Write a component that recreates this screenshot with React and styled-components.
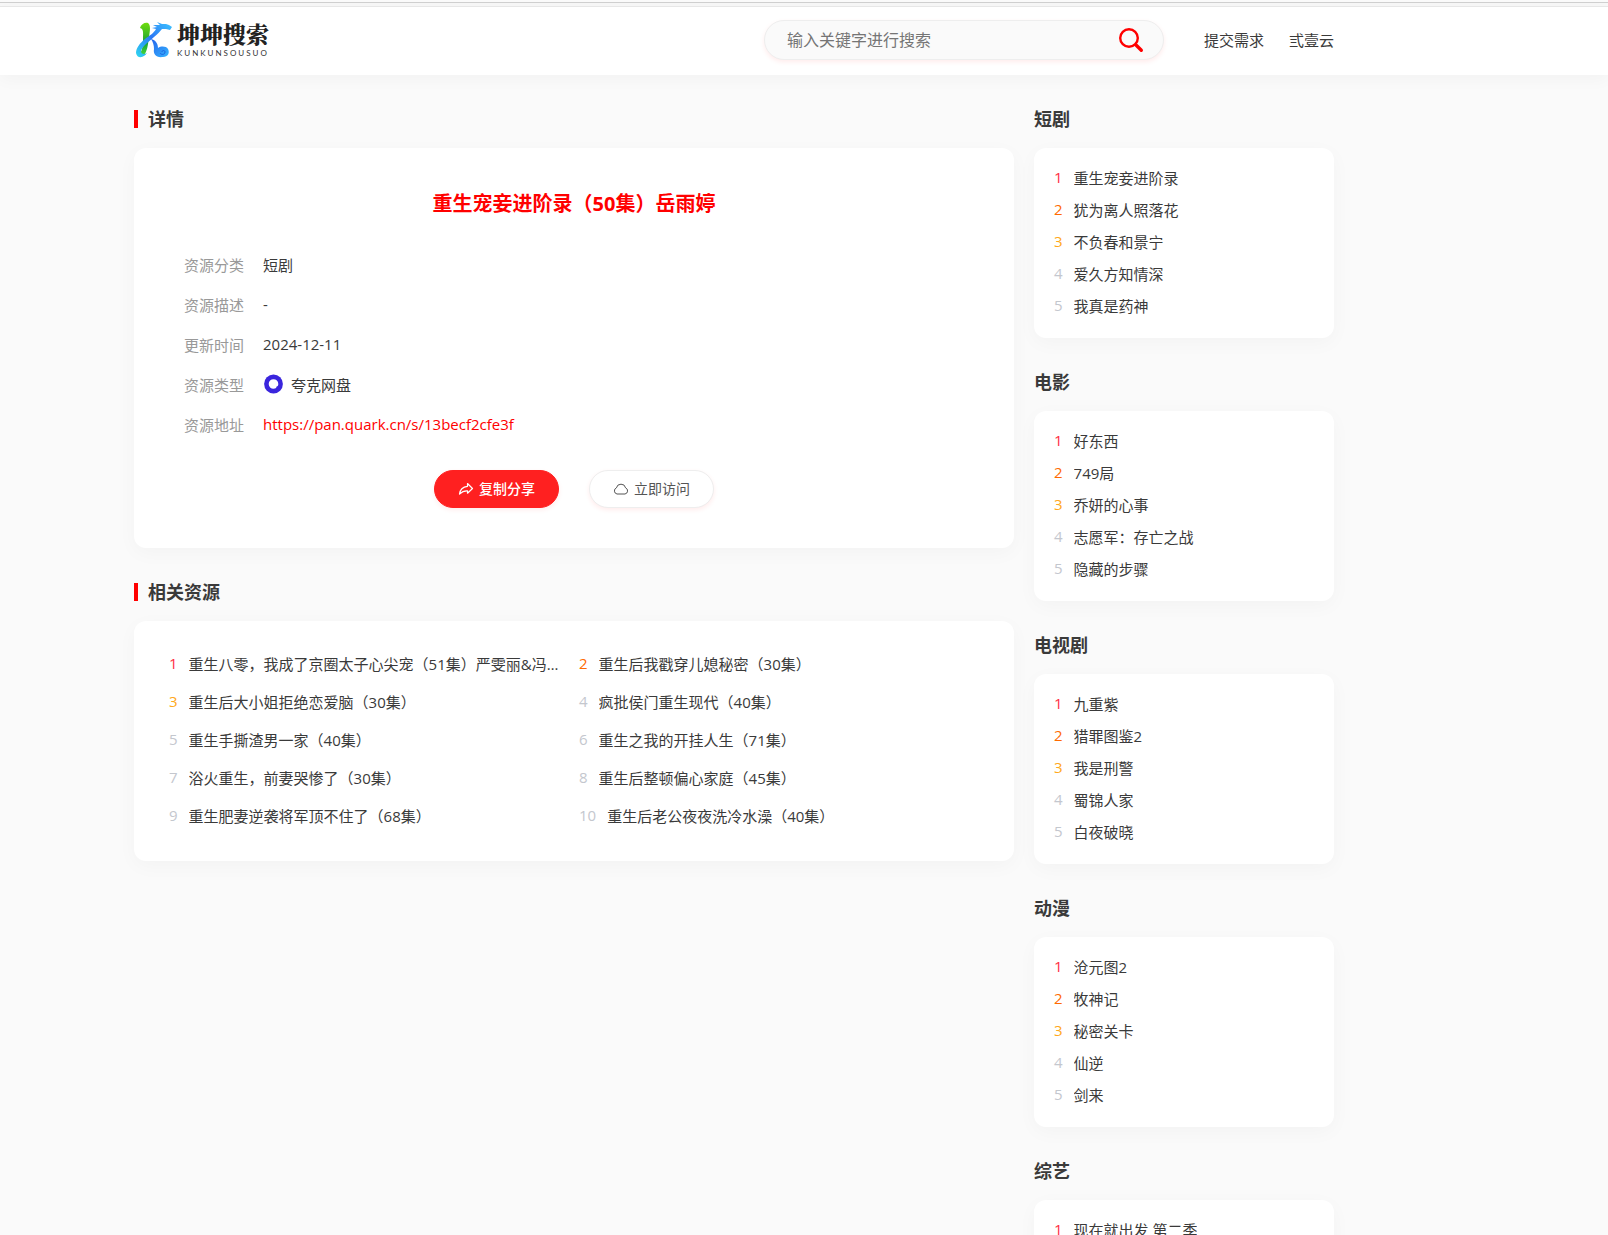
import styled, { createGlobalStyle } from "styled-components";

const menu = ["提交需求", "弎壹云"];

const details = [
    { label: "资源分类", value: "短剧" },
    { label: "资源描述", value: "-" },
    { label: "更新时间", value: "2024-12-11" },
    { label: "资源类型", value: "夸克网盘", quark: true },
    { label: "资源地址", value: "https://pan.quark.cn/s/13becf2cfe3f", link: true },
];

const related = [
    "重生八零，我成了京圈太子心尖宠（51集）严雯丽&冯子航",
    "重生后我戳穿儿媳秘密（30集）",
    "重生后大小姐拒绝恋爱脑（30集）",
    "疯批侯门重生现代（40集）",
    "重生手撕渣男一家（40集）",
    "重生之我的开挂人生（71集）",
    "浴火重生，前妻哭惨了（30集）",
    "重生后整顿偏心家庭（45集）",
    "重生肥妻逆袭将军顶不住了（68集）",
    "重生后老公夜夜洗冷水澡（40集）",
];

const rankings = [
    { title: "短剧", items: ["重生宠妾进阶录", "犹为离人照落花", "不负春和景宁", "爱久方知情深", "我真是药神"] },
    { title: "电影", items: ["好东西", "749局", "乔妍的心事", "志愿军：存亡之战", "隐藏的步骤"] },
    { title: "电视剧", items: ["九重紫", "猎罪图鉴2", "我是刑警", "蜀锦人家", "白夜破晓"] },
    { title: "动漫", items: ["沧元图2", "牧神记", "秘密关卡", "仙逆", "剑来"] },
    { title: "综艺", items: ["现在就出发 第二季"] },
];

const rankColors = ["#ff2e43", "#ff6a00", "#ffa820"];

const LogoMark = () => (
    <svg width="36" height="36" viewBox="0 0 36 36" aria-hidden="true">
        <defs>
            <linearGradient id="stem" x1="0" y1="0" x2="0" y2="1">
                <stop offset="0" stopColor="#6fdc0c" />
                <stop offset="0.6" stopColor="#18a035" />
                <stop offset="1" stopColor="#4ade3a" />
            </linearGradient>
            <linearGradient id="dragon" x1="1" y1="0" x2="0" y2="1">
                <stop offset="0" stopColor="#3cc6ff" />
                <stop offset="0.5" stopColor="#2b78f5" />
                <stop offset="1" stopColor="#2fd9f0" />
            </linearGradient>
            <linearGradient id="tail" x1="0" y1="0" x2="1" y2="1">
                <stop offset="0" stopColor="#2563eb" />
                <stop offset="1" stopColor="#35b4ff" />
            </linearGradient>
        </defs>
        <path d="M4 6C5 2 9 0 12 1C15 3 14 9 13 15C12 23 11 30 8 33C6 35 3 35 2 33C6 31 7 24 7 18C7 11 8 7 4 6Z" fill="url(#stem)" />
        <path d="M36 5L33 3L30 2L26 2L21 0L24 3L17 3L21 5L16 6L20 7C18 11 13 14 9 17C4 21 0 26 0 31C1 37 8 36 11 31C8 33 5 32 5 29C6 24 13 20 18 15C22 12 24 9 26 7L30 7L34 8Z" fill="url(#dragon)" />
        <path d="M15 17C20 18 22 22 22 26C25 24 30 24 32 27C34 31 32 35 27 35C20 36 17 32 18 27C18 23 17 20 15 17Z" fill="url(#tail)" />
        <path d="M24 31C25 33 29 33 29 30C29 28 26 28 26 30" fill="none" stroke="#1d63e0" />
    </svg>
);

const SearchIcon = () => (
    <svg width="26" height="26" viewBox="0 0 26 26" fill="none" stroke="#ff0000" aria-hidden="true">
        <circle cx="11" cy="11" r="8.8" strokeWidth="2.400" />
        <path d="M18 18L23.300 23.300" strokeWidth="3.400" strokeLinecap="round" />
    </svg>
);

const ShareIcon = () => (
    <svg width="16" height="16" viewBox="0 0 16 16" fill="none" stroke="currentColor" strokeWidth="1.200" strokeLinejoin="round" aria-hidden="true">
        <path d="M9.500 3.500L14.500 8.500L9.500 13.200V10.800C6 10.600 4 11.500 1.500 14C2 9.800 5 6.800 9.500 6.300Z" />
    </svg>
);

const CloudIcon = () => (
    <svg width="16" height="16" viewBox="0 0 16 16" fill="none" stroke="currentColor" aria-hidden="true">
        <path d="M4 14H12A3.200 3.200 0 0 0 12.600 7.900A4.700 4.700 0 0 0 3.400 7.900A3.200 3.200 0 0 0 4 14Z" />
    </svg>
);

const QuarkIcon = () => (
    <svg width="20" height="20" viewBox="0 0 20 20" aria-hidden="true">
        <circle cx="10.500" cy="10" r="9.400" fill="#3a25dd" />
        <path d="M10.500 5.200A4.800 4.800 0 0 1 15.300 10C15.300 11.800 14.800 12.300 13.600 12.600C13.400 14.200 12.400 14.800 10.500 14.800A4.800 4.800 0 0 1 10.500 5.200Z" fill="#fff" />
    </svg>
);

const Ranking = ({ title, items }) => (
    <section>
        <Heading>{title}</Heading>
        <RankCard>
            {items.map((item, i) => (
                <RankItem key={item} href="#">
                    <Rank color={rankColors[i]}>{i + 1}</Rank>
                    <ItemName>{item}</ItemName>
                </RankItem>
            ))}
        </RankCard>
    </section>
);

export default function App() {
    return (
        <>
            <GlobalStyle />
            <WindowEdge />
            <Header>
                <HeaderInner>
                    <Logo href="#">
                        <LogoMark />
                        <LogoText>
                            <LogoName>坤坤搜索</LogoName>
                            <LogoLatin>KUNKUNSOUSUO</LogoLatin>
                        </LogoText>
                    </Logo>
                    <SearchForm onSubmit={e => e.preventDefault()}>
                        <SearchInput type="text" aria-label="搜索" placeholder="输入关键字进行搜索" />
                        <SearchButton aria-label="搜索">
                            <SearchIcon />
                        </SearchButton>
                    </SearchForm>
                    <Menu>
                        {menu.map(item => <MenuLink key={item} href="#">{item}</MenuLink>)}
                    </Menu>
                </HeaderInner>
            </Header>

            <Content>
                <Main>
                    <Heading $marked>详情</Heading>
                    <DetailCard>
                        <Title>重生宠妾进阶录（50集）岳雨婷</Title>
                        {details.map(d => (
                            <DetailRow key={d.label}>
                                <DetailLabel>{d.label}</DetailLabel>
                                {d.quark && <QuarkIcon />}
                                {d.link
                                    ? <DetailLink href={d.value}>{d.value}</DetailLink>
                                    : <span>{d.value}</span>
                                }
                            </DetailRow>
                        ))}
                        <Actions>
                            <Button $primary><ShareIcon />复制分享</Button>
                            <Button><CloudIcon />立即访问</Button>
                        </Actions>
                    </DetailCard>

                    <Heading $marked>相关资源</Heading>
                    <RelatedCard>
                        {related.map((item, i) => (
                            <RelatedItem key={item} href="#">
                                <Rank color={rankColors[i]}>{i + 1}</Rank>
                                <ItemName>{item}</ItemName>
                            </RelatedItem>
                        ))}
                    </RelatedCard>
                </Main>

                <Sidebar>
                    {rankings.map(r => <Ranking key={r.title} {...r} />)}
                </Sidebar>
            </Content>
        </>
    );
}

const GlobalStyle = createGlobalStyle`
    * {
        box-sizing: border-box;
    }
    html {
        overflow-x: hidden;
        scrollbar-width: none;
    }
    body {
        margin: 0;
        background-color: #fafafa;
        color: #3a3a3a;
        font-family: "Open Sans", "Noto Sans CJK SC", sans-serif;
        font-size: 15px;
    }
    a {
        color: inherit;
        text-decoration: none;
    }
    input, button {
        font-family: inherit;
    }
`;

const WindowEdge = styled.div`
    height: 7px;
    border-bottom: 1px solid #e8e8e8;
    background: linear-gradient(#fafafa 2px, #cfcfcf 2px, #cfcfcf 3px, #f7f7f7 3px);
`;

const Header = styled.header`
    background-color: #ffffff;
    box-shadow: 0 5px 15px rgba(0, 0, 0, 0.03);
`;

const HeaderInner = styled.div`
    max-width: 1200px;
    height: 68px;
    margin: 0 134px;
    padding-bottom: 2px;
    display: flex;
    align-items: center;
`;

const Logo = styled.a`
    display: flex;
    align-items: center;
    gap: 5px;
    margin-right: auto;
    padding-left: 2px;
`;

const LogoText = styled.span`
    display: flex;
    flex-direction: column;
    color: #222222;
`;

const LogoName = styled.span`
    font-family: "Noto Serif CJK SC", "Noto Sans CJK SC", serif;
    font-size: 23px;
    font-weight: 900;
    line-height: 24px;
`;

const LogoLatin = styled.span`
    padding-top: 2px;
    font-family: Lato, sans-serif;
    font-size: 8px;
    line-height: 10px;
    letter-spacing: 2px;
    color: #333333;
`;

const SearchForm = styled.form`
    width: 400px;
    height: 40px;
    padding: 0 19px 0 22px;
    border: 1px solid #eeeeee;
    border-radius: 20px;
    background-color: #fafafa;
    box-shadow: 0 2px 5px rgba(255, 0, 0, 0.08);
    display: flex;
    align-items: center;
`;

const SearchInput = styled.input`
    flex: 1;
    min-width: 0;
    padding: 0;
    border: none;
    background: none;
    font-size: 16px;
    &:focus {
        outline: none;
    }
    &::placeholder {
        color: #757575;
    }
`;

const SearchButton = styled.button`
    display: flex;
    padding: 0;
    border: none;
    background: none;
    cursor: pointer;
`;

const Menu = styled.nav`
    display: flex;
    gap: 25px;
    margin-left: 40px;
`;

const MenuLink = styled.a`
    line-height: 24px;
`;

const Content = styled.div`
    max-width: 1200px;
    margin: 0 134px;
    display: flex;
    gap: 20px;
`;

const Main = styled.main`
    flex: 1;
    min-width: 0;
`;

const Sidebar = styled.aside`
    width: 300px;
    padding-bottom: 30px;
`;

const Heading = styled.h2`
    margin: 0;
    padding: 30px 0 15px;
    display: flex;
    align-items: center;
    font-size: 18px;
    font-weight: 700;
    line-height: 28px;
    &::before {
        content: ${props => props.$marked ? '""' : "none"};
        width: 4px;
        height: 18px;
        margin-right: 10px;
        background-color: #ff0000;
    }
`;

const Card = styled.div`
    border-radius: 12px;
    background-color: #ffffff;
    box-shadow: 0 5px 20px rgba(0, 0, 0, 0.03);
`;

const DetailCard = styled(Card)`
    padding: 40px 50px;
`;

const Title = styled.h1`
    margin: 0 0 24px;
    color: #ff0000;
    font-size: 20px;
    font-weight: 700;
    line-height: 32px;
    text-align: center;
`;

const DetailRow = styled.div`
    height: 40px;
    display: flex;
    align-items: center;
    svg {
        margin-right: 8px;
    }
`;

const DetailLabel = styled.span`
    width: 79px;
    color: #999999;
`;

const DetailLink = styled.a`
    color: #ff0000;
`;

const Actions = styled.div`
    margin-top: 26px;
    display: flex;
    justify-content: center;
    gap: 30px;
`;

const Button = styled.button`
    width: 125px;
    height: 38px;
    padding: 0 0 2px;
    border: 1px solid ${props => props.$primary ? "#ff2020" : "#eeeeee"};
    border-radius: 19px;
    background-color: ${props => props.$primary ? "#ff2020" : "#ffffff"};
    color: ${props => props.$primary ? "#ffffff" : "#555555"};
    box-shadow: 0 2px 5px rgba(255, 0, 0, 0.08);
    display: flex;
    align-items: center;
    justify-content: center;
    gap: 5px;
    font-size: 14px;
    font-weight: ${props => props.$primary ? 500 : 400};
    cursor: pointer;
`;

const RelatedCard = styled(Card)`
    padding: 23px 25px 27px 35px;
    display: grid;
    grid-template-columns: 1fr 1fr;
`;

const RelatedItem = styled.a`
    height: 38px;
    padding-right: 15px;
    min-width: 0;
    display: flex;
    align-items: center;
`;

const RankCard = styled(Card)`
    padding: 13px 20px 17px;
`;

const RankItem = styled.a`
    height: 32px;
    display: flex;
    align-items: center;
`;

const Rank = styled.span`
    margin-right: 11px;
    color: ${props => props.color || "#c4c7ce"};
`;

const ItemName = styled.span`
    min-width: 0;
    overflow: hidden;
    text-overflow: ellipsis;
    white-space: nowrap;
`;
